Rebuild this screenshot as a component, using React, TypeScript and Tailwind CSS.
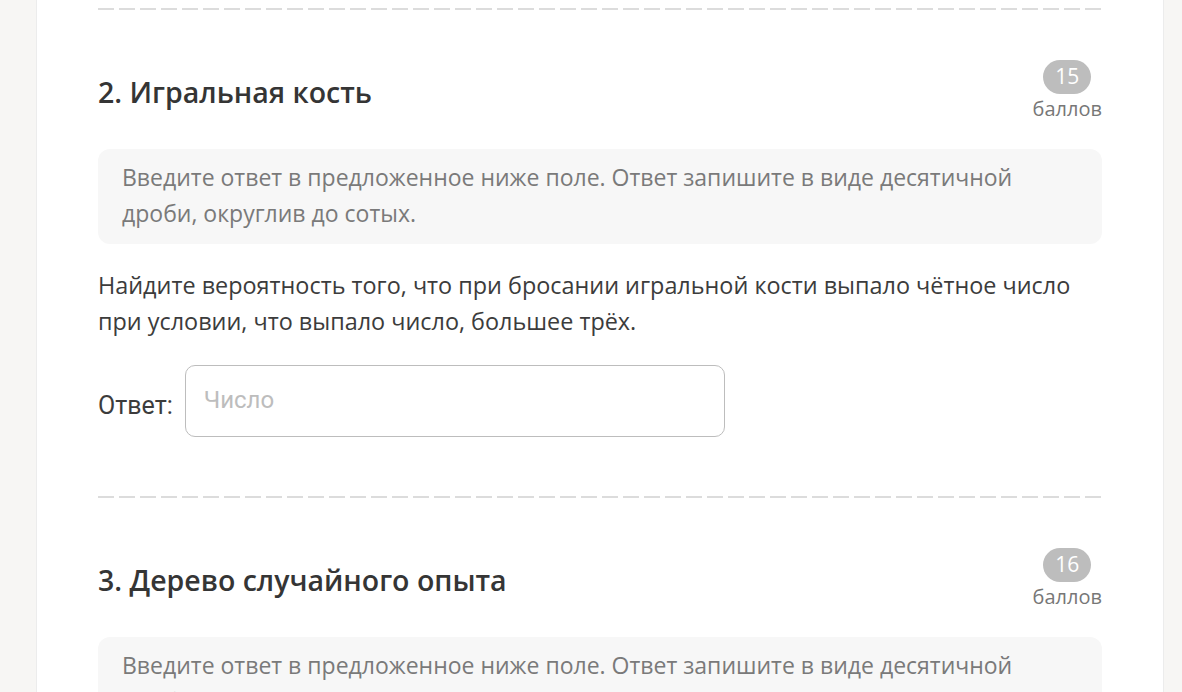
const tasks = [
  {
    n: 2,
    title: "Игральная кость",
    points: 15,
    text: "Найдите вероятность того, что при бросании игральной кости выпало чётное число при условии, что выпало число, большее трёх.",
  },
  {
    n: 3,
    title: "Дерево случайного опыта",
    points: 16,
    text: "",
  },
];

function Dashes() {
  return <div className="h-[2px] w-full bg-[repeating-linear-gradient(to_right,#dcdcdc_0_16px,transparent_16px_21px)]"></div>;
}

function Task({ n, title, points, text }: { n: number; title: string; points: number; text: string }) {
  return (
    <div className="pt-[50px]">
      <div className="flex items-start justify-between">
        <h2 className="mt-[14px] text-[28.5px] leading-[36px] font-semibold text-[#353535]">
          {n}. {title}
        </h2>
        <div className="flex flex-col items-center">
          <div className="flex h-[34px] w-[48px] items-center justify-center rounded-full bg-[#bdbdbd] text-[21px] text-white">
            {points}
          </div>
          <div className="mt-[2px] text-[20px] leading-[26px] text-[#777]">баллов</div>
        </div>
      </div>

      <div className="mt-[27px] rounded-xl bg-[#f7f7f7] px-6 pt-[10px] pb-[13px] text-[23px] leading-[36px] text-[#7a7a7a]">
        Введите ответ в предложенное ниже поле. Ответ запишите в виде десятичной дроби, округлив до сотых.
      </div>

      {text && (
        <>
          <p className="mt-[23px] text-[23.4px] leading-[36px] text-[#3c3c3c]">{text}</p>
          <div className="mt-[26px] flex items-center gap-3">
            <span className="mt-[10px] font-['Roboto',sans-serif] text-[25px] text-[#3c3c3c]">Ответ:</span>
            <input
              placeholder="Число"
              className="h-[72px] w-[540px] rounded-[10px] border border-[#bdbdbd] px-[18px] pb-[2px] font-['Roboto',sans-serif] text-[24px] outline-none placeholder:text-[#bdbdbd]"
            />
          </div>
          <div className="mt-[59px]">
            <Dashes />
          </div>
        </>
      )}
    </div>
  );
}

export default function App() {
  return (
    <div className="min-h-screen bg-[#f7f6f4] font-['Open_Sans',sans-serif]">
      <div className="ml-[36px] min-h-screen w-[1128px] border-x border-[#ececec] bg-white px-[61px] pt-[8px]">
        <Dashes />
        {tasks.map((t) => (
          <Task key={t.n} {...t} />
        ))}
      </div>
    </div>
  );
}
